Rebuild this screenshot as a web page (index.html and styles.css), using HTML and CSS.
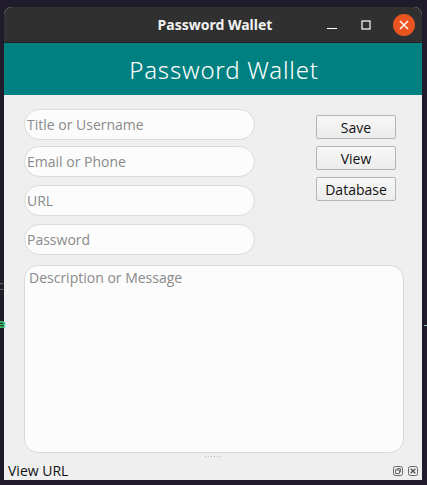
FILE: index.html
```html
<!DOCTYPE html>
<html>
<head>
<meta charset="utf-8">
<link rel="stylesheet" href="styles.css">
</head>
<body>
<div class="desk">
  <span class="ghost ghost-c">c</span>
  <span class="ghost ghost-e">e</span>
  <span class="ghost-line"></span>
  <div class="window">
    <div class="titlebar">
      <div class="title">Password Wallet</div>
      <div class="controls">
        <svg class="ctl" width="14" height="14" viewBox="0 0 14 14"><path d="M2 10.5h10" stroke="#fff" stroke-width="1.2"/></svg>
        <svg class="ctl" width="14" height="14" viewBox="0 0 14 14"><rect x="3" y="3" width="8" height="8" fill="none" stroke="#fff" stroke-width="1.2"/></svg>
        <span class="close"><svg width="22" height="22" viewBox="0 0 22 22"><path d="M7 7l8 8M15 7l-8 8" stroke="#fff" stroke-width="1.4"/></svg></span>
      </div>
    </div>
    <div class="header">Password Wallet</div>
    <div class="content">
      <div class="top">
        <div class="fields">
          <input class="field f1" placeholder="Title or Username">
          <input class="field f2" placeholder="Email or Phone">
          <input class="field f3" placeholder="URL">
          <input class="field f4" placeholder="Password">
        </div>
        <div class="buttons">
          <button class="btn">Save</button>
          <button class="btn">View</button>
          <button class="btn">Database</button>
        </div>
      </div>
      <textarea class="desc" placeholder="Description or Message"></textarea>
      <div class="grip"><span class="grip-dots"></span></div>
      <div class="status">
        <span class="status-text">View URL</span>
        <span class="dock-icons">
          <svg width="10" height="10" viewBox="0 0 10 10"><rect x="0.5" y="0.5" width="9" height="9" rx="2" fill="none" stroke="#666"/><rect x="2.5" y="4" width="4" height="3.5" fill="none" stroke="#666" stroke-width="0.9"/><path d="M4 4V2.5h3.5V6H6.5" fill="none" stroke="#666" stroke-width="0.9"/></svg>
          <svg width="10" height="10" viewBox="0 0 10 10"><rect x="0.5" y="0.5" width="9" height="9" rx="2" fill="none" stroke="#666"/><path d="M2.7 2.7l4.6 4.6M7.3 2.7l-4.6 4.6" stroke="#555" stroke-width="1.4"/></svg>
        </span>
      </div>
    </div>
  </div>
</div>
</body>
</html>
```

FILE: styles.css
```css
html, body {
  margin: 0;
  padding: 0;
  background: #1f1b2a;
}
.desk {
  position: relative;
  width: 427px;
  height: 485px;
  padding: 7px 5px 5px 4px;
  box-sizing: border-box;
  overflow: hidden;
}
.ghost {
  position: absolute;
  left: -3px;
  font-family: "DejaVu Sans", sans-serif;
  font-size: 13px;
}
.ghost-c { top: 278px; color: #666; }
.ghost-e { top: 316px; color: #3ec46d; font-weight: bold; }
.ghost-line {
  position: absolute;
  left: 424px;
  top: 325px;
  width: 4px;
  height: 1px;
  background: #9bb;
}
.window {
  display: flex;
  flex-direction: column;
  height: 473px;
  border-radius: 8px 8px 0 0;
  overflow: hidden;
  background: #efefef;
}
.titlebar {
  position: relative;
  height: 36px;
  background: #303030;
  display: flex;
  align-items: center;
  justify-content: center;
  border-bottom: 1px solid #222;
  box-sizing: border-box;
}
.title {
  font-family: "Noto Sans", sans-serif;
  font-weight: bold;
  font-size: 14px;
  color: #f2f2f2;
  margin-left: 4px;
}
.controls {
  position: absolute;
  right: 7px;
  top: 7px;
  display: flex;
  align-items: center;
  gap: 20px;
}
.close {
  width: 22px;
  height: 22px;
  border-radius: 50%;
  background: #e95420;
  display: flex;
}
.header {
  height: 52px;
  background: #008080;
  color: #fff;
  font-family: "Noto Sans", sans-serif;
  font-weight: 300;
  font-size: 24px;
  letter-spacing: 0.8px;
  display: flex;
  align-items: center;
  justify-content: center;
  padding-left: 22px;
}
.content {
  flex: 1;
  display: flex;
  flex-direction: column;
  padding: 14px 18px 0 20px;
}
.top {
  display: flex;
  justify-content: space-between;
}
.fields {
  display: flex;
  flex-direction: column;
  width: 231px;
}
.field {
  height: 31px;
  box-sizing: border-box;
  border: 1px solid #dadada;
  border-radius: 16px;
  background: #fcfcfc;
  font-family: "Open Sans", sans-serif;
  font-size: 14px;
  padding: 0 0 0 2px;
  outline: none;
}
.field::placeholder { color: #8a8a8a; }
.f2 { margin-top: 6px; }
.f3 { margin-top: 8px; }
.f4 { margin-top: 8px; }
.buttons {
  display: flex;
  flex-direction: column;
  gap: 7px;
  padding-top: 6px;
  margin-right: 8px;
}
.btn {
  width: 80px;
  height: 24px;
  box-sizing: border-box;
  border: 1px solid #b4b4b4;
  border-radius: 2px;
  background: linear-gradient(#f8f8f8, #ececec);
  font-family: "Open Sans", sans-serif;
  font-size: 14px;
  color: #111;
  padding: 0;
}
.desc {
  margin-top: 10px;
  height: 188px;
  box-sizing: border-box;
  border: 1px solid #dadada;
  border-radius: 14px;
  background: #fcfcfc;
  font-family: "Open Sans", sans-serif;
  font-size: 14px;
  padding: 2px 4px;
  resize: none;
  outline: none;
}
.desc::placeholder { color: #8a8a8a; }
.grip {
  height: 7px;
  display: flex;
  justify-content: center;
  align-items: center;
  padding-right: 2px;
}
.grip-dots {
  width: 17px;
  height: 1px;
  background: repeating-linear-gradient(90deg, #b8b8b8 0 1px, transparent 1px 3px);
}
.status {
  display: flex;
  justify-content: space-between;
  align-items: center;
  margin: 0 -14px 0 -16px;
  height: 20px;
}
.status-text {
  font-family: "Open Sans", sans-serif;
  font-size: 14px;
  color: #111;
}
.dock-icons {
  display: flex;
  gap: 5px;
  padding-top: 2px;
}
```
